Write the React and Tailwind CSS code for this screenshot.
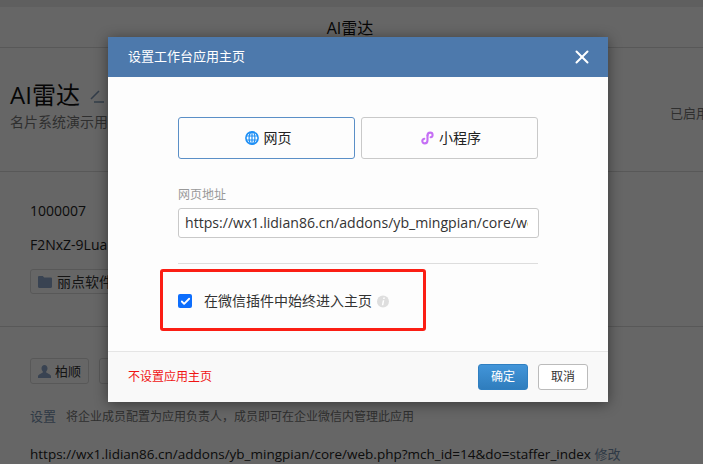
import React from 'react';
import { X, Check } from 'lucide-react';

const font = "font-['Open_Sans','Noto_Sans_CJK_SC',sans-serif]";

const GlobeIcon = () => (
  <svg width="14" height="14" viewBox="0 0 14 14" fill="none" stroke="#1e8ff5" strokeWidth="1.6">
    <circle cx="7" cy="7" r="6.1" />
    <ellipse cx="7" cy="7" rx="2.9" ry="6" strokeWidth="1.2" />
    <path d="M1 5h12M1 9h12M7 1v12" strokeWidth="1.2" />
  </svg>
);

const MiniAppIcon = () => (
  <svg width="13" height="14" viewBox="0 0 13 14" fill="none" stroke="#c56ff5" strokeWidth="2.1" strokeLinecap="round">
    <path d="M6.5 4.6C6.5 2.8 7.6 1.6 9.2 1.6c1.4 0 2.4 1 2.4 2.3 0 1.2-.8 2.1-2 2.4" />
    <path d="M6.5 4.6v4.6c0 1.8-1.1 3.2-2.8 3.2-1.4 0-2.4-1-2.4-2.3 0-1.2.8-2.1 2-2.4" />
  </svg>
);

const FolderIcon = () => (
  <svg width="14" height="12" viewBox="0 0 14 12" fill="#8fa9cc">
    <path d="M0 1.2C0 .5.5 0 1.2 0h3.6l1.400 1.600h6.600c.7 0 1.200.5 1.200 1.200v8c0 .7-.5 1.200-1.200 1.200H1.200C.5 12 0 11.500 0 10.800z" />
  </svg>
);

const PersonIcon = () => (
  <svg width="13" height="13" viewBox="0 0 13 13" fill="#8fa9cc">
    <path d="M6.500 0C4.700 0 3.500 1.400 3.500 3.300c0 1.300.5 2.500 1.300 3.200v1L1.600 9.200C.6 9.700 0 10.400 0 11.300V13h13v-1.700c0-.9-.6-1.600-1.600-2.100L8.200 7.500v-1c.8-.7 1.300-1.900 1.300-3.200C9.500 1.400 8.300 0 6.500 0z" />
  </svg>
);

const InfoDot = () => (
  <svg className="ml-[5px]" width="12" height="13" viewBox="0 0 12 13">
    <circle cx="6" cy="6.500" r="6" fill="#dedede" />
    <path d="M6.400 2.500h1.500l-.3 1.500H6.100zM5.800 5.200h1.500l-1 5H4.800z" fill="#fff" />
  </svg>
);

const Page = () => (
  <div className="flex flex-col h-[464px] overflow-hidden bg-white text-[#333] text-sm">
    <div className="h-2 bg-[#eeeeee]" />
    <div className="h-[41px] shrink-0 border-b border-[#ddd] flex items-center justify-center text-base text-[#111] pt-[1px] pr-[3px]">
      AI雷达
    </div>

    <div className="h-[124px] shrink-0 border-b border-[#ddd] pl-[10px] flex justify-between">
      <div className="pt-[29px]">
        <div className="flex items-center h-9 text-2xl text-[#111]">
          AI雷达
          <svg className="ml-[10px] mt-[2px]" width="14" height="14" viewBox="0 0 14 14" fill="none" stroke="#7f9ab8" strokeWidth="1.6">
            <path d="M1 10 9 2M4 13h10" />
          </svg>
        </div>
        <div className="text-sm text-[#777] leading-5 mt-[-1px] whitespace-nowrap">名片系统演示用</div>
      </div>
      <div className="pt-[55px] text-[13px] text-[#777] leading-5 w-[33px] whitespace-nowrap">已启用</div>
    </div>

    <div className="h-[155px] shrink-0 border-b border-[#ddd] pl-[30px] pt-[29px]">
      <div className="leading-5 text-[#222]">1000007</div>
      <div className="leading-5 mt-[14px] text-[#222]">F2NxZ-9Lua</div>
      <div className="mt-[14px] h-[25px] w-[90px] border border-[#ddd] rounded-[3px] flex items-center pl-[7px] gap-[5px]">
        <FolderIcon />
        <span className="text-sm whitespace-nowrap">丽点软件</span>
      </div>
    </div>

    <div className="pl-[30px] pt-[31px]">
      <div className="flex gap-[10px]">
        <div className="h-[26px] w-[59px] border border-[#ddd] rounded-[3px] flex items-center pl-[7px] gap-[4px] text-[13px]">
          <PersonIcon />
          柏顺
        </div>
        <div className="h-[26px] w-[59px] border border-[#ddd] rounded-[3px]" />
      </div>
      <div className="mt-[22px] leading-5 whitespace-nowrap text-xs text-[#777]">
        <span className="text-[13px] text-[#7590ad] mr-[10px]">设置</span>
        将企业成员配置为应用负责人，成员即可在企业微信内管理此应用
      </div>
      <div className="mt-[17px] leading-5 whitespace-nowrap text-[13.5px] text-[#222]">
        https://wx1.lidian86.cn/addons/yb_mingpian/core/web.php?mch_id=14&amp;do=staffer_index <span className="text-[13px] text-[#7590ad]">修改</span>
      </div>
    </div>
  </div>
);

const Modal = () => (
  <div className="absolute left-[108px] top-[37px] w-[500px] h-[365px] bg-white shadow-[0_2px_14px_rgba(0,0,0,0.45)] rounded-[2px] flex flex-col">
    <div className="h-10 shrink-0 bg-[#4d79ac] flex items-center justify-between pl-5 pr-[15px] text-white text-[13px]">
      <span>设置工作台应用主页</span>
      <X size={22} strokeWidth={2.2} />
    </div>

    <div className="flex-1 px-[70px] pt-10 bg-[#fdfdfd]">
      <div className="flex gap-[6px]">
        <div className="w-[177px] h-[42px] border border-[#5b8fc7] rounded-[3px] flex items-center justify-center gap-[5px] pl-[3px] text-sm text-[#222]">
          <GlobeIcon />
          网页
        </div>
        <div className="w-[177px] h-[42px] border border-[#c9c9c9] rounded-[3px] flex items-center justify-center gap-[5px] pl-[3px] text-sm text-[#222]">
          <MiniAppIcon />
          小程序
        </div>
      </div>

      <div className="mt-[27px] text-xs text-[#999] leading-[18px]">网页地址</div>
      <div className="mt-1 w-[361px] h-[30px] border border-[#c9c9c9] rounded-[3px] pl-[6px] pr-[10px] flex items-center bg-white">
        <span className="text-[14.1px] text-[#333] whitespace-nowrap overflow-hidden min-w-0">https://wx1.lidian86.cn/addons/yb_mingpian/core/web.php?mch_id=14</span>
      </div>

      <div className="mt-[25px] w-[360px] border-t border-[#ddd]" />

      <div className="mt-[27px] flex items-center">
        <div className="w-[14px] h-[14px] bg-[#0d6efd] rounded-[2px] flex items-center justify-center">
          <Check size={11} strokeWidth={4} color="white" />
        </div>
        <span className="ml-3 text-sm leading-5 text-[#333]">在微信插件中始终进入主页</span>
        <InfoDot />
      </div>
    </div>

    <div className="h-[51px] shrink-0 bg-[#f9f9f9] border-t border-[#e5e5e5] flex items-center justify-between pl-5 pr-5">
      <span className="text-xs text-[#f01414]">不设置应用主页</span>
      <div className="flex gap-[10px]">
        <div className="w-[50px] h-[26px] rounded-[3px] border border-[#2f7fc1] bg-gradient-to-b from-[#4295d9] to-[#2f7dbd] text-white text-xs flex items-center justify-center">确定</div>
        <div className="w-[50px] h-[26px] rounded-[3px] border border-[#bbb] bg-white text-[#333] text-xs flex items-center justify-center">取消</div>
      </div>
    </div>

    {/* red annotation drawn over the screenshot */}
    <div className="absolute left-[52px] top-[232px] w-[266px] h-[62px] border-[3px] border-[#fb1e14] rounded-[3px]" />
  </div>
);

export default function App() {
  return (
    <div className={`relative w-[703px] h-[464px] overflow-hidden ${font}`}>
      <Page />
      <div className="absolute inset-0 bg-black/60" />
      <Modal />
    </div>
  );
}
